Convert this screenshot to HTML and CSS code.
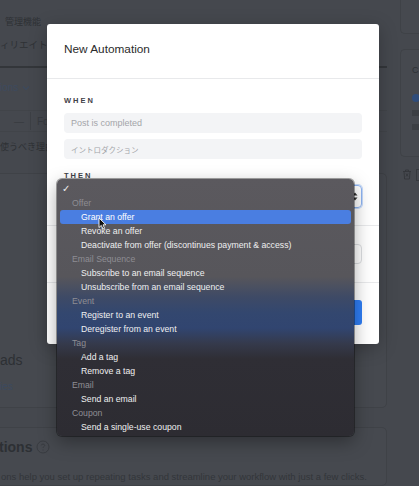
FILE: index.html
```html
<!DOCTYPE html>
<html lang="en">
<head>
    <meta charset="UTF-8">
    <meta name="viewport" content="width=device-width, initial-scale=1.0">
    <title>New Automation</title>
    <link rel="stylesheet" href="styles.css">
</head>
<body>
    <div class="page">
        <!-- Page behind the dialog -->
        <main class="main">
            <div class="top-block">
                <p class="jp-line jp-a">管理機能</p>
                <p class="jp-line jp-b">ィリエイト</p>
                <div class="tab-rule"></div>
                <p class="link-toggle">ions
                    <svg width="8" height="6" viewBox="0 0 8 6"><path d="M1 1.5 L4 4.5 L7 1.5" fill="none" stroke="currentColor" stroke-width="1.1"/></svg>
                </p>
                <div class="range-box">
                    <span class="dash">—</span>
                    <span class="sep"></span>
                    <span class="range-text">Fo</span>
                </div>
                <p class="jp-line jp-c">使うべき理由</p>
            </div>

            <section class="card card-leads">
                <h3 class="card-title">ads</h3>
                <span class="card-link">ies</span>
            </section>

            <section class="card card-auto">
                <h2 class="card-title big">tions
                    <svg width="14" height="14" viewBox="0 0 14 14"><circle cx="7" cy="7" r="6" fill="none" stroke="currentColor" stroke-width="1"/><path d="M5.3 5.4 C5.3 3.6 8.7 3.6 8.7 5.4 C8.7 6.6 7 6.6 7 8" fill="none" stroke="currentColor" stroke-width="1"/><circle cx="7" cy="10" r="0.6" fill="currentColor"/></svg>
                </h2>
                <p class="card-text">ons help you set up repeating tasks and streamline your workflow with just a few clicks.</p>
            </section>
        </main>

        <aside class="side">
            <div class="side-card side-top"></div>
            <div class="side-card side-opts">
                <span class="side-c">C</span>
                <span class="side-radio"></span>
                <span class="side-bar"></span>
                <span class="side-bar"></span>
            </div>
            <div class="side-actions">
                <svg width="10" height="11" viewBox="0 0 10 11"><path d="M1 2.5 H9 M3.5 2.5 V1 H6.5 V2.5 M2 2.5 L2.6 10 H7.4 L8 2.5 M4 4.5 L6 7.5 M6 4.5 L4 7.5" fill="none" stroke="currentColor" stroke-width="0.9"/></svg>
                <span class="side-icon"></span>
            </div>
        </aside>
    </div>

    <!-- Dialog -->
    <div class="modal">
        <div class="modal-header">New Automation</div>

        <div class="modal-section when">
            <div class="field-label">When</div>
            <input class="field" type="text" placeholder="Post is completed">
            <input class="field field-jp" type="text" placeholder="イントロダクション">
            <div class="field-label then">Then</div>
            <div class="select">
                <svg width="6" height="9" viewBox="0 0 6 9"><path d="M3 0.5 L5.5 3.5 H0.5 Z M3 8.5 L5.5 5.5 H0.5 Z" fill="#333"/></svg>
            </div>
        </div>

        <div class="modal-section extra">
            <div class="field field-plain"></div>
        </div>

        <div class="modal-footer">
            <button class="btn-primary" type="button">Create</button>
        </div>
    </div>

    <!-- Native select menu, opened -->
    <ul class="menu">
        <li class="menu-row check">✓</li>
        <li class="menu-row group">Offer</li>
        <li class="menu-row item active">Grant an offer</li>
        <li class="menu-row item">Revoke an offer</li>
        <li class="menu-row item">Deactivate from offer (discontinues payment &amp; access)</li>
        <li class="menu-row group">Email Sequence</li>
        <li class="menu-row item">Subscribe to an email sequence</li>
        <li class="menu-row item">Unsubscribe from an email sequence</li>
        <li class="menu-row group">Event</li>
        <li class="menu-row item">Register to an event</li>
        <li class="menu-row item">Deregister from an event</li>
        <li class="menu-row group">Tag</li>
        <li class="menu-row item">Add a tag</li>
        <li class="menu-row item">Remove a tag</li>
        <li class="menu-row group">Email</li>
        <li class="menu-row item">Send an email</li>
        <li class="menu-row group">Coupon</li>
        <li class="menu-row item">Send a single-use coupon</li>
    </ul>

    <svg class="cursor" width="9" height="13" viewBox="0 0 9 13"><path d="M1 1 L1 10.5 L3.3 8.4 L5 12 L6.6 11.3 L5 7.8 L8 7.8 Z" fill="#111" stroke="#fff" stroke-width="0.9" stroke-linejoin="round"/></svg>
</body>
</html>
```

FILE: styles.css
```css
body {
    margin: 0;
    height: 486px;
    overflow: hidden;
    background-color: #45484e;
    font-family: "Liberation Sans", "Noto Sans CJK JP", sans-serif;
}

.page {
    display: flex;
    gap: 13px;
    height: 486px;
}

/* background page (dimmed) */
.main {
    flex: none;
    width: 387px;
    display: flex;
    flex-direction: column;
}

.top-block {
    padding-top: 11px;
}

.jp-line {
    margin: 0;
    font-family: "Noto Sans CJK JP", sans-serif;
    font-size: 9px;
    line-height: 22px;
    color: #2e3135;
}

.jp-a {
    padding-left: 5px;
}

.jp-b {
    font-size: 9.5px;
}

.tab-rule {
    margin-top: 11px;
    height: 2px;
    background-color: #33363a;
}

.link-toggle {
    margin: 9px 0 0;
    font-size: 10px;
    line-height: 22px;
    color: #3d4a5e;
    display: flex;
    align-items: center;
    gap: 4px;
}

.range-box {
    margin-top: 11px;
    height: 20px;
    display: flex;
    align-items: center;
    gap: 6px;
    padding-left: 14px;
    border-top: 1px solid #414449;
    border-bottom: 1px solid #414449;
    font-size: 10px;
    color: #383b40;
}

.sep {
    width: 1px;
    height: 18px;
    background-color: #3d4045;
}

.jp-c {
    margin-top: 4px;
}

.card {
    margin-left: -10px;
    border: 1px solid #3f4247;
    border-radius: 5px;
    background-color: #46494f;
    display: flex;
    flex-direction: column;
}

.card-leads {
    margin-top: 15px;
    height: 235px;
    box-sizing: border-box;
    justify-content: flex-end;
    padding-bottom: 12px;
}

.card-title {
    margin: 0;
    font-size: 14px;
    line-height: 20px;
    font-weight: normal;
    color: #2d3034;
}

.card-title.big {
    font-weight: bold;
    display: flex;
    align-items: center;
    gap: 4px;
    margin-left: 8px;
}

.card-title.big svg {
    color: #383b40;
}

.card-leads .card-title {
    margin-left: 9px;
}

.card-link {
    margin: 9px 0 0 9px;
    font-size: 10px;
    line-height: 16px;
    color: #3c4a5f;
}

.card-auto {
    margin-top: 19px;
    flex: 1;
    padding-top: 9px;
}

.card-text {
    margin: 13px 0 0 10px;
    font-size: 9.5px;
    line-height: 14px;
    color: #33363a;
}

.side {
    flex: 1;
    display: flex;
    flex-direction: column;
}

.side-card {
    border: 1px solid #3f4247;
    border-right: none;
    border-radius: 5px 0 0 5px;
    background-color: #46494f;
}

.side-top {
    margin-top: -6px;
    height: 38px;
}

.side-opts {
    margin-top: 15px;
    height: 108px;
    display: flex;
    flex-direction: column;
    padding: 14px 0 0 11px;
    box-sizing: border-box;
    gap: 8px;
}

.side-c {
    font-size: 9px;
    color: #2f3236;
    line-height: 12px;
}

.side-radio {
    margin-top: 10px;
    width: 8px;
    height: 8px;
    border-radius: 50%;
    background-color: #2f4c7a;
}

.side-bar {
    width: 10px;
    height: 6px;
    background-color: #3c3f44;
}

.side-actions {
    margin-top: 12px;
    padding-left: 2px;
    display: flex;
    gap: 4px;
    color: #33363a;
}

.side-icon {
    width: 8px;
    height: 10px;
    border: 1px solid #36393e;
}

/* dialog */
.modal {
    position: absolute;
    left: 47px;
    top: 24px;
    width: 332px;
    height: 320px;
    background-color: #fff;
    border-radius: 3px;
    box-shadow: 0 4px 18px rgba(0, 0, 0, 0.25);
    display: flex;
    flex-direction: column;
}

.modal-header {
    height: 55px;
    box-sizing: border-box;
    padding: 16px 17px 0;
    line-height: 18px;
    font-size: 11.8px;
    color: #2b2b2b;
    border-bottom: 1px solid #e8e9eb;
}

.modal-section {
    padding: 0 17px;
    border-bottom: 1px solid #e8e9eb;
    display: flex;
    flex-direction: column;
}

.modal-section.when {
    height: 147px;
    box-sizing: border-box;
    padding-top: 17px;
}

.field-label {
    font-size: 7.5px;
    line-height: 10px;
    font-weight: bold;
    letter-spacing: 2px;
    text-transform: uppercase;
    color: #3f4247;
    margin-bottom: 7px;
}

.field-label.then {
    margin-top: 6px;
    margin-bottom: 4px;
}

.field {
    height: 20px;
    box-sizing: border-box;
    border: none;
    border-radius: 4px;
    background-color: #f3f4f6;
    padding: 0 7px;
    font-family: "Liberation Sans", sans-serif;
    font-size: 9px;
    margin: 0 0 6px;
    outline: none;
}

.field::placeholder {
    color: #a3a5a9;
}

.field-jp {
    font-family: "Noto Sans CJK JP", sans-serif;
    font-size: 7.5px;
}

.select {
    height: 23px;
    box-sizing: border-box;
    border: 1px solid #8fb5f3;
    border-radius: 4px;
    box-shadow: 0 0 0 1px #c6daf9;
    display: flex;
    align-items: center;
    justify-content: flex-end;
    padding-right: 3px;
}

.modal-section.extra {
    height: 57px;
    box-sizing: border-box;
    padding-top: 18px;
}

.field-plain {
    background-color: #fff;
    border: 1px solid #dcdee1;
    margin: 0;
}

.modal-footer {
    flex: 1;
    display: flex;
    justify-content: flex-end;
    align-items: flex-start;
    padding: 17px 17px 0;
}

.btn-primary {
    height: 25px;
    width: 64px;
    border: none;
    border-radius: 3px;
    background-color: #2f7ef5;
    color: #fff;
    font-size: 10px;
}

/* opened select menu */
.menu {
    position: absolute;
    left: 57px;
    top: 179px;
    width: 297px;
    height: 257px;
    box-sizing: border-box;
    margin: 0;
    padding: 3px 3px 2px;
    list-style: none;
    border-radius: 5px;
    background: linear-gradient(180deg, #5b595e 0%, #57565b 38%, #3e4a66 46%, #33476f 52%, #314570 58%, #353a4c 64%, #2f2e35 70%, #2d2c32 100%);
    box-shadow: 0 6px 18px rgba(0, 0, 0, 0.35), 0 0 0 1px rgba(0, 0, 0, 0.35);
    font-family: "Liberation Sans", sans-serif;
    font-size: 8.7px;
}

.menu-row {
    height: 14px;
    line-height: 14px;
    white-space: nowrap;
    border-radius: 3px;
}

.menu-row.check {
    padding-left: 2px;
    color: #eee;
    font-size: 10px;
}

.menu-row.group {
    padding-left: 12px;
    color: #8e8d93;
}

.menu-row.item {
    padding-left: 21px;
    color: #efeff0;
}

.menu-row.active {
    background-color: #4a7ee1;
    color: #fff;
}

.cursor {
    position: absolute;
    left: 98px;
    top: 217px;
}
```
